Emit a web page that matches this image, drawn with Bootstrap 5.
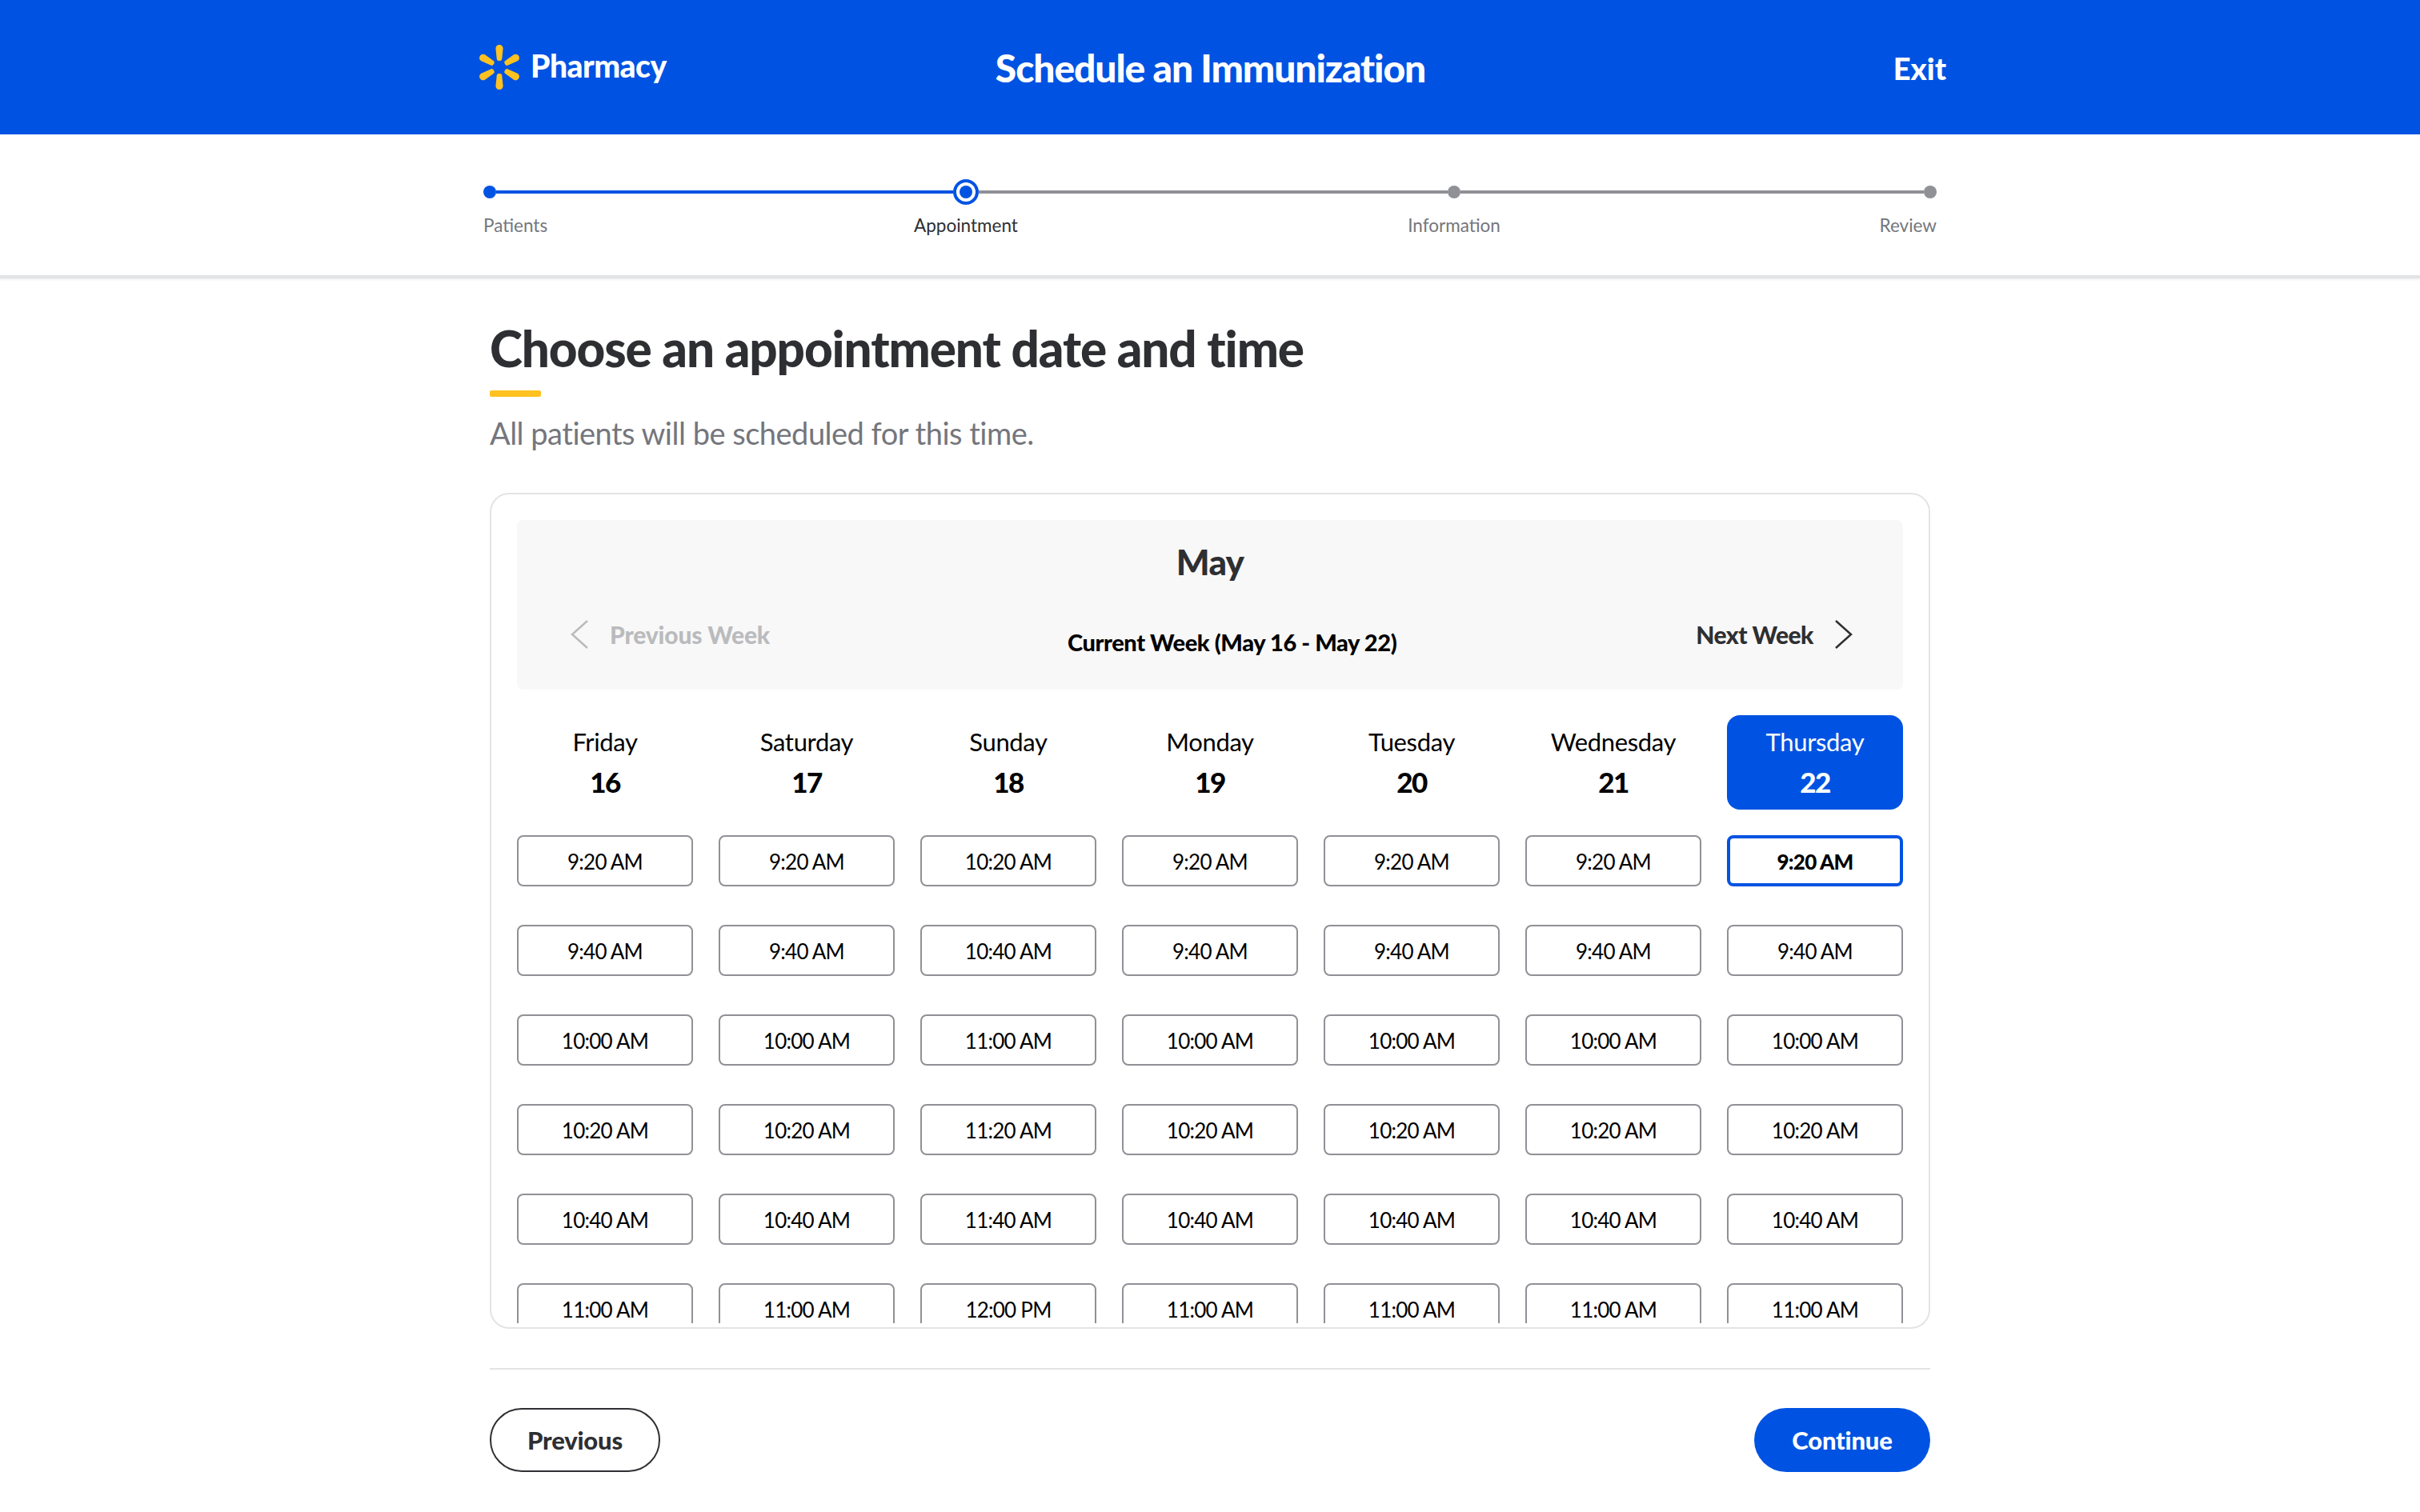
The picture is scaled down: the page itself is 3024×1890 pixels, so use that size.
<!doctype html>
<html lang="en"><head><meta charset="utf-8"><title>Schedule an Immunization</title>
<link href="https://cdn.jsdelivr.net/npm/bootstrap@5.3.0/dist/css/bootstrap.min.css" rel="stylesheet">
<style>
body{font-family:"Lato","Liberation Sans",sans-serif;background:#fff;color:#2e2f32;width:3024px;height:1890px;overflow:hidden}
.hdr{background:#0053e2;height:168px;padding:0;color:#fff}
.hdr-in{width:1848px;margin:0 auto;padding:0 4px 0 11px;display:grid;grid-template-columns:1fr auto 1fr;align-items:center;height:100%}
.brand-txt{font-size:39px;font-weight:900;letter-spacing:-.5px;color:#fff;line-height:1;margin-top:-3px;margin-left:-2px}
.hdr-title{font-size:48px;font-weight:900;letter-spacing:-1.1px;margin:2px 0 0 -6px;line-height:1}
.hdr-exit{font-size:38px;font-weight:900;color:#fff;text-decoration:none;text-align:right;line-height:1;margin-top:2px}
.stepbar{height:180px;border-bottom:4px solid #e3e4e5;box-shadow:0 2px 2px #f2f2f2;padding-top:56px}
.step-wrap{width:1816px;margin:0 auto}
.track{height:32px}
.dot{width:16px;height:16px;border-radius:50%;background:#909196;flex:none}
.dot-on{background:#0053e2}
.ring{width:32px;height:32px;border-radius:50%;border:4px solid #0053e2;flex:none;display:flex;align-items:center;justify-content:center;background:#fff}
.ring i{display:block;width:16px;height:16px;border-radius:50%;background:#0053e2}
.seg{height:4px;background:#909196}
.seg-on{background:#0053e2}
.step-lbls{font-size:22.5px;color:#74767c;margin-top:10px;line-height:32px}
.lbl-a{width:503px}
.lbl-b{width:200px;text-align:center}
.lbl-gap{margin-left:410px}
.lbl-r{flex:1;text-align:right}
.lbl-cur{color:#2e2f32}
.main-w{width:1800px;margin:0 auto}
.pg-title{font-size:62px;font-weight:900;letter-spacing:-1.1px;line-height:1;margin:56px 0 0}
.accent{width:64px;height:8px;background:#ffc220;border-radius:2px;margin-top:22px}
.pg-sub{font-size:38px;color:#74767c;letter-spacing:-.5px;line-height:1;margin:26px 0 0}
.cal{margin-top:56px;height:1045px;border:2px solid #e3e4e5;border-radius:24px;padding:32px 32px 5px}
.weekbar{background:#f8f8f8;height:212px;flex:none;border-radius:8px;padding:0 62px 0 66px}
.mon{font-size:44px;font-weight:900;text-align:center;line-height:1;padding-top:30px;padding-right:4px;letter-spacing:-.7px}
.weekrow{margin-top:51px;height:36px}
.wk-link{font-size:30px;font-weight:900;letter-spacing:-.15px;line-height:1;gap:26px}
.wk-next{color:#2e2f32;letter-spacing:-.5px}
.wk-off{color:#babbbe}
.wk-cur{font-size:29px;font-weight:900;color:#000;letter-spacing:-.4px;line-height:1;margin-top:18px;margin-right:2px}
.days-clip{height:760px;margin-top:32px;overflow:hidden;display:grid;grid-template-columns:repeat(7,220px);column-gap:32px;flex:none}
.slots{display:flex;flex-direction:column;gap:48px}
.dayhd{height:118px;flex:none;border-radius:16px;text-align:center;color:#000;padding-top:15px;margin-bottom:-16px}
.dayhd-on{background:#0053e2;color:#fff}
.dayn{font-size:31px;line-height:36px;letter-spacing:-.35px}
.dayd{font-size:35px;font-weight:900;line-height:36px;margin-top:14px;letter-spacing:-1.5px}
.tm{height:64px;flex:none;width:100%;border:2px solid #909196;border-radius:8px;background:#fff;color:#000;font-size:26px;padding:1px 0 0;line-height:1;letter-spacing:-.75px;--bs-btn-hover-bg:#fff}
.tm-on{border:4px solid #0053e2;font-weight:900}
.foot-w{border-top:2px solid #e3e4e5;margin-top:49px;padding-top:48px}
.pill{height:80px;border-radius:40px;font-size:31px;font-weight:900;padding:0;letter-spacing:-.2px}
.pill-o{width:213px;border:2px solid #2e2f32;color:#2e2f32;background:#fff}
.pill-p{width:220px;background:#0053e2;border:0;color:#fff}
</style></head><body>
<nav class="navbar hdr"><div class="hdr-in">
<a class="d-flex align-items-center gap-3 text-decoration-none" href="#">
<svg width="50" height="56" viewBox="-25 -28 50 56" aria-hidden="true"><g fill="#ffc220"><path id="p" d="M0-28C2.7-28 4.6-26 4.6-23.5L3.2-10C3-8.6 1.6-8 0-8S-3-8.6-3.2-10L-4.6-23.5C-4.6-26-2.7-28 0-28Z"/><use href="#p" transform="rotate(60)"/><use href="#p" transform="rotate(120)"/><use href="#p" transform="rotate(180)"/><use href="#p" transform="rotate(240)"/><use href="#p" transform="rotate(300)"/></g></svg>
<span class="brand-txt">Pharmacy</span></a>
<h1 class="hdr-title">Schedule an Immunization</h1>
<a class="hdr-exit" href="#">Exit</a>
</div></nav>
<div class="stepbar"><div class="step-wrap">
<div class="track d-flex align-items-center"><span class="dot dot-on"></span><span class="seg seg-on" style="width:571px"></span><span class="ring"><i></i></span><span class="seg" style="width:586px"></span><span class="dot"></span><span class="seg" style="width:579px"></span><span class="dot"></span></div>
<div class="step-lbls d-flex"><span class="lbl-a">Patients</span><span class="lbl-b lbl-cur">Appointment</span><span class="lbl-b lbl-gap">Information</span><span class="lbl-r">Review</span></div>
</div></div>
<main class="main-w">
<h2 class="pg-title">Choose an appointment date and time</h2>
<div class="accent"></div>
<p class="pg-sub">All patients will be scheduled for this time.</p>
<section class="card cal">
<div class="weekbar">
<div class="mon">May</div>
<div class="weekrow d-flex justify-content-between align-items-center">
<a class="wk-link wk-off d-flex align-items-center text-decoration-none" href="#"><svg width="24" height="36" viewBox="0 0 24 36" aria-hidden="true"><path d="M22 1 3 18l19 17" fill="none" stroke="#babbbe" stroke-width="2.5"/></svg>Previous Week</a>
<div class="wk-cur">Current Week (May 16 - May 22)</div>
<a class="wk-link wk-next d-flex align-items-center text-decoration-none" href="#">Next Week<svg width="24" height="36" viewBox="0 0 24 36" aria-hidden="true"><path d="M2 1l19 17L2 35" fill="none" stroke="#2e2f32" stroke-width="2.5"/></svg></a>
</div></div>
<div class="days-clip">
<div class="slots"><div class="dayhd"><div class="dayn">Friday</div><div class="dayd">16</div></div><button class="btn tm">9:20 AM</button><button class="btn tm">9:40 AM</button><button class="btn tm">10:00 AM</button><button class="btn tm">10:20 AM</button><button class="btn tm">10:40 AM</button><button class="btn tm">11:00 AM</button></div>
<div class="slots"><div class="dayhd"><div class="dayn">Saturday</div><div class="dayd">17</div></div><button class="btn tm">9:20 AM</button><button class="btn tm">9:40 AM</button><button class="btn tm">10:00 AM</button><button class="btn tm">10:20 AM</button><button class="btn tm">10:40 AM</button><button class="btn tm">11:00 AM</button></div>
<div class="slots"><div class="dayhd"><div class="dayn">Sunday</div><div class="dayd">18</div></div><button class="btn tm">10:20 AM</button><button class="btn tm">10:40 AM</button><button class="btn tm">11:00 AM</button><button class="btn tm">11:20 AM</button><button class="btn tm">11:40 AM</button><button class="btn tm">12:00 PM</button></div>
<div class="slots"><div class="dayhd"><div class="dayn">Monday</div><div class="dayd">19</div></div><button class="btn tm">9:20 AM</button><button class="btn tm">9:40 AM</button><button class="btn tm">10:00 AM</button><button class="btn tm">10:20 AM</button><button class="btn tm">10:40 AM</button><button class="btn tm">11:00 AM</button></div>
<div class="slots"><div class="dayhd"><div class="dayn">Tuesday</div><div class="dayd">20</div></div><button class="btn tm">9:20 AM</button><button class="btn tm">9:40 AM</button><button class="btn tm">10:00 AM</button><button class="btn tm">10:20 AM</button><button class="btn tm">10:40 AM</button><button class="btn tm">11:00 AM</button></div>
<div class="slots"><div class="dayhd"><div class="dayn">Wednesday</div><div class="dayd">21</div></div><button class="btn tm">9:20 AM</button><button class="btn tm">9:40 AM</button><button class="btn tm">10:00 AM</button><button class="btn tm">10:20 AM</button><button class="btn tm">10:40 AM</button><button class="btn tm">11:00 AM</button></div>
<div class="slots"><div class="dayhd dayhd-on"><div class="dayn">Thursday</div><div class="dayd">22</div></div><button class="btn tm tm-on">9:20 AM</button><button class="btn tm">9:40 AM</button><button class="btn tm">10:00 AM</button><button class="btn tm">10:20 AM</button><button class="btn tm">10:40 AM</button><button class="btn tm">11:00 AM</button></div>
</div>
</section>
<div class="foot-w d-flex justify-content-between">
<button class="btn pill pill-o">Previous</button>
<button class="btn pill pill-p">Continue</button>
</div>
</main>
</body></html>
